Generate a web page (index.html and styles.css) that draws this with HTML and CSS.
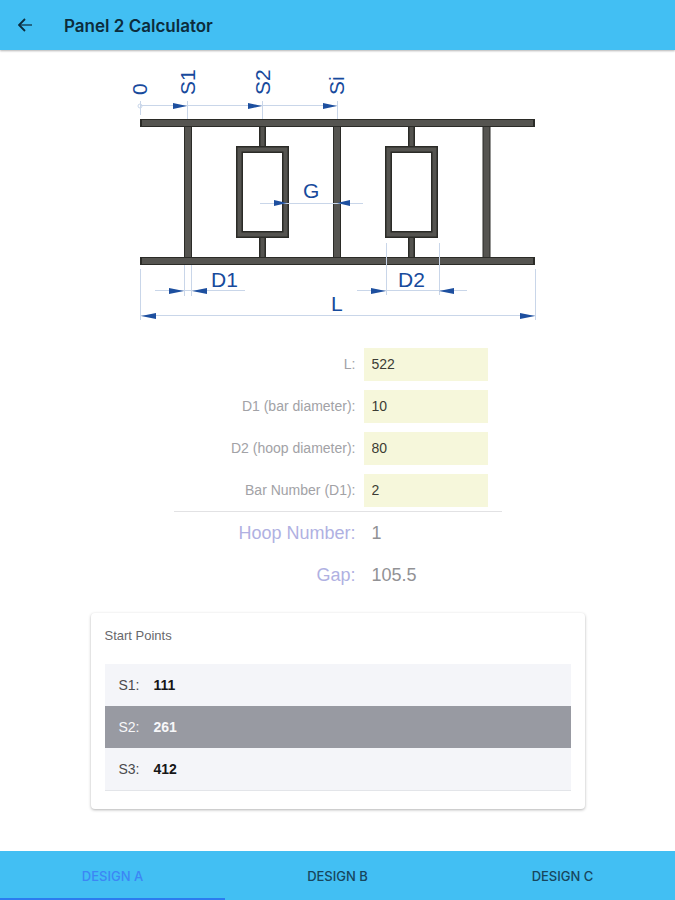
FILE: index.html
```
<!DOCTYPE html>
<html lang="en">
<head>
  <meta charset="UTF-8">
  <meta name="viewport" content="width=device-width, initial-scale=1.0">
  <title>Panel 2 Calculator</title>
  <link rel="stylesheet" href="styles.css">
</head>
<body>
  <header class="toolbar">
    <button class="back-btn" type="button" aria-label="Back">
      <svg width="14" height="14" viewBox="0 0 14 14" fill="none" stroke="currentColor">
        <path d="M7 1L1 7l6 6" stroke-width="1.8"/>
        <path d="M1 7h13" stroke-width="1.2"/>
      </svg>
    </button>
    <h1>Panel 2 Calculator</h1>
  </header>

  <main class="content">
    <svg class="drawing" viewBox="127 60 421 270" role="img" aria-label="Panel dimensions">
      <!-- posts -->
      <g class="edge">
        <path d="M188 125v134M337 125v134M486.500 125v134" stroke-width="8"/>
        <path d="M262.500 125v24M262.500 235v24M411.500 125v24M411.500 235v24" stroke-width="7"/>
      </g>
      <g class="steel">
        <path d="M188 125v134M337 125v134M486.500 125v134" stroke-width="6"/>
        <path d="M262.500 125v24M262.500 235v24M411.500 125v24M411.500 235v24" stroke-width="4"/>
      </g>
      <!-- hoops -->
      <g class="edge" stroke-width="7">
        <rect x="239.500" y="149.500" width="46" height="85"/>
        <rect x="388.500" y="149.500" width="46" height="85"/>
      </g>
      <g class="steel" stroke-width="4">
        <rect x="239.500" y="149.500" width="46" height="85"/>
        <rect x="388.500" y="149.500" width="46" height="85"/>
      </g>
      <!-- rails -->
      <path class="edge" d="M140 123h395M140 261h395" stroke-width="8"/>
      <path class="steel" d="M142 123h391M142 261h391" stroke-width="6"/>

      <!-- dimension lines -->
      <path class="dim" d="M140.500 101v14M140 105.500h197M187.500 101v18M262.500 101v18M337.500 101v18
        M260 203.500h103M155 290.500h90M184.500 265v31M191.500 265v31
        M357 290.500h110M386.500 243v52M439.500 243v52
        M140.500 269v51M535.500 269v51M140 315.500h395"/>
      <circle class="dim" cx="140" cy="106" r="2"/>
      <g class="arrow">
        <path d="M187 106l-14-3v6zM262 106l-14-3v6zM337 106l-14-3v6z"/>
        <path d="M287 203l-13-3v6zM337 203l13-3v6z"/>
        <path d="M184 291l-15-3v6zM192 291l15-3v6z"/>
        <path d="M386 291l-15-3v6zM439 291l15-3v6z"/>
        <path d="M141 316l15-3v6zM535 316l-15-3v6z"/>
      </g>
      <g class="dim-text">
        <text transform="translate(147 95) rotate(-90)">0</text>
        <text transform="translate(195 95) rotate(-90)">S1</text>
        <text transform="translate(270 95) rotate(-90)">S2</text>
        <text transform="translate(344 95) rotate(-90)">Si</text>
        <text x="303" y="198">G</text>
        <text x="211" y="287">D1</text>
        <text x="398" y="287">D2</text>
        <text x="331" y="311">L</text>
      </g>
    </svg>

    <form class="calc">
      <div class="row">
        <label for="length">L:</label>
        <input id="length" type="text" inputmode="decimal" value="522">
      </div>
      <div class="row">
        <label for="bar-diameter">D1 (bar diameter):</label>
        <input id="bar-diameter" type="text" inputmode="decimal" value="10">
      </div>
      <div class="row">
        <label for="hoop-diameter">D2 (hoop diameter):</label>
        <input id="hoop-diameter" type="text" inputmode="decimal" value="80">
      </div>
      <div class="row">
        <label for="bar-number">Bar Number (D1):</label>
        <input id="bar-number" type="text" inputmode="numeric" value="2">
      </div>
      <div class="results">
        <div class="row result">
          <label for="hoop-number">Hoop Number:</label>
          <output id="hoop-number">1</output>
        </div>
        <div class="row result">
          <label for="gap">Gap:</label>
          <output id="gap">105.5</output>
        </div>
      </div>
    </form>

    <section class="card">
      <h2>Start Points</h2>
      <ul class="points">
        <li><span>S1:</span><strong>111</strong></li>
        <li class="dark"><span>S2:</span><strong>261</strong></li>
        <li><span>S3:</span><strong>412</strong></li>
      </ul>
    </section>
  </main>

  <nav class="tabs">
    <button class="tab active" type="button">DESIGN A</button>
    <button class="tab" type="button">DESIGN B</button>
    <button class="tab" type="button">DESIGN C</button>
  </nav>
</body>
</html>
```
FILE: styles.css
```
* {
  box-sizing: border-box;
}

body {
  display: flex;
  flex-direction: column;
  min-height: 100vh;
  margin: 0;
  background: #fff;
  font-family: "Liberation Sans", Arial, sans-serif;
  font-size: 14px;
}

.toolbar {
  display: flex;
  align-items: center;
  gap: 32px;
  height: 50px;
  padding: 0 18px;
  background: #42bff3;
  box-shadow: 0 1px 2px rgba(0, 0, 0, 0.3);
  color: #0c2c3c;
}

.toolbar h1 {
  margin: 0;
  padding-top: 2px;
  font-family: Inter, sans-serif;
  font-size: 17px;
  font-weight: 600;
}

.back-btn {
  display: flex;
  padding: 0;
  border: none;
  background: none;
  color: inherit;
  cursor: pointer;
}

.content {
  flex: 1;
  padding: 10px 16px 40px;
}

/* drawing */
.drawing {
  display: block;
  width: 100%;
  max-width: 421px;
  margin: 0 auto;
}

.edge {
  fill: none;
  stroke: #2b2b27;
}

.steel {
  fill: none;
  stroke: #555450;
}

.dim {
  fill: none;
  stroke: #c9d6e9;
}

.arrow {
  fill: #1d4f9f;
}

.dim-text {
  fill: #174a9c;
  font-size: 21px;
}

/* inputs and results */
.calc {
  max-width: 328px;
  margin: 0 auto;
  padding-top: 13px;
}

.row {
  display: grid;
  grid-template-columns: 182px 124px;
  gap: 8px;
  align-items: center;
  height: 42px;
}

.row label {
  color: #a2a2a6;
  text-align: right;
}

.row input {
  width: 100%;
  height: 33px;
  padding: 0 8px;
  border: none;
  border-radius: 0;
  background: #f6f7db;
  color: #3c3c34;
  font: inherit;
}

.results {
  border-top: 1px solid #e2e2e4;
}

.result {
  font-size: 18px;
}

.result label {
  color: #b0b1e2;
}

.result output {
  padding-left: 8px;
  color: #929295;
}

/* start points */
.card {
  max-width: 494px;
  margin: 17px auto 0;
  padding: 14px 14px 18px;
  border-radius: 4px;
  box-shadow: 0 1px 3px rgba(0, 0, 0, 0.3);
}

.card h2 {
  margin: 0 0 20px;
  color: #68686b;
  font-size: 13px;
  font-weight: 400;
  line-height: 17px;
}

.points {
  margin: 0;
  padding: 0;
  border-bottom: 1px solid #e3e5e9;
  list-style: none;
}

.points li {
  display: flex;
  align-items: center;
  gap: 14px;
  height: 42px;
  padding: 0 14px;
  background: #f4f5f9;
  color: #4b4b4e;
}

.points strong {
  color: #161617;
}

.points .dark,
.points .dark strong {
  background: #989aa2;
  color: #f7f7f9;
}

/* bottom tabs */
.tabs {
  display: grid;
  grid-template-columns: repeat(3, 1fr);
  height: 49px;
  background: #42bff3;
}

.tab {
  padding: 2px 0 0;
  border: none;
  border-bottom: 2px solid transparent;
  background: none;
  color: #17465d;
  font-family: Inter, sans-serif;
  font-size: 13px;
  font-weight: 500;
  cursor: pointer;
}

.tab.active {
  border-color: #2b7cf0;
  color: #3c86f5;
}
```
